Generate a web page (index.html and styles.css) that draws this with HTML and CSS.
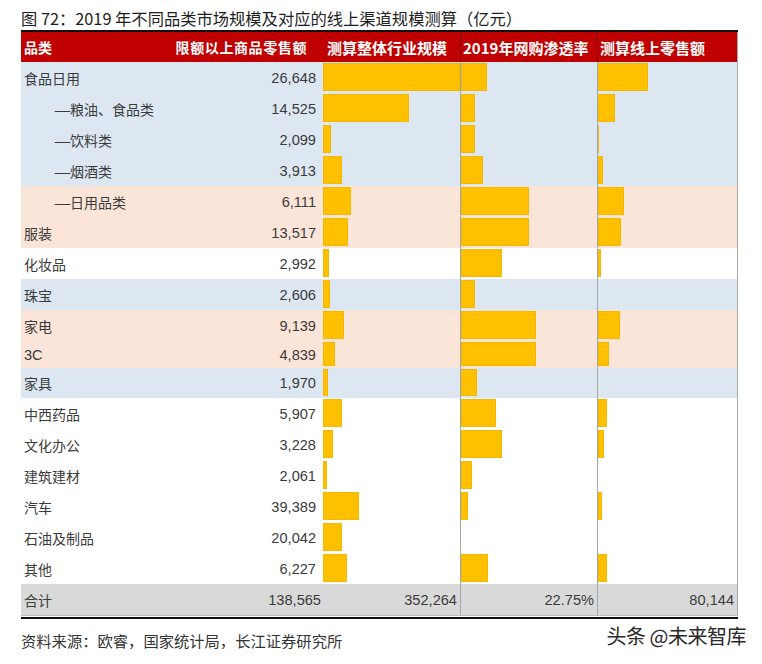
FILE: index.html
```html
<!DOCTYPE html>
<html lang="zh">
<head>
<meta charset="utf-8">
<link rel="stylesheet" href="styles.css">
</head>
<body>
<div class="page">
  <h1 class="title">图 72：2019 年不同品类市场规模及对应的线上渠道规模测算（亿元）</h1>
  <div class="table">
    <div class="row head">
      <div class="first"><span>品类</span><span class="hnum">限额以上商品零售额</span></div>
      <div class="hcell">测算整体行业规模</div>
      <div class="hcell sep">2019年网购渗透率</div>
      <div class="hcell sep">测算线上零售额</div>
    </div>

    <div class="row blue">
      <div class="first"><span>食品日用</span><span class="num">26,648</span></div>
      <div class="bc"><i style="width:137px"></i></div>
      <div class="bc sep"><i style="width:26px"></i></div>
      <div class="bc sep"><i style="width:50px"></i></div>
    </div>
    <div class="row blue">
      <div class="first"><span class="sub"><span class="dash">—</span>粮油、食品类</span><span class="num">14,525</span></div>
      <div class="bc"><i style="width:86px"></i></div>
      <div class="bc sep"><i style="width:14px"></i></div>
      <div class="bc sep"><i style="width:17px"></i></div>
    </div>
    <div class="row blue">
      <div class="first"><span class="sub"><span class="dash">—</span>饮料类</span><span class="num">2,099</span></div>
      <div class="bc"><i style="width:8px"></i></div>
      <div class="bc sep"><i style="width:14px"></i></div>
      <div class="bc sep"><i style="width:1px"></i></div>
    </div>
    <div class="row blue">
      <div class="first"><span class="sub"><span class="dash">—</span>烟酒类</span><span class="num">3,913</span></div>
      <div class="bc"><i style="width:19px"></i></div>
      <div class="bc sep"><i style="width:22px"></i></div>
      <div class="bc sep"><i style="width:5px"></i></div>
    </div>
    <div class="row peach">
      <div class="first"><span class="sub"><span class="dash">—</span>日用品类</span><span class="num">6,111</span></div>
      <div class="bc"><i style="width:28px"></i></div>
      <div class="bc sep"><i style="width:68px"></i></div>
      <div class="bc sep"><i style="width:26px"></i></div>
    </div>
    <div class="row peach">
      <div class="first"><span>服装</span><span class="num">13,517</span></div>
      <div class="bc"><i style="width:25px"></i></div>
      <div class="bc sep"><i style="width:68px"></i></div>
      <div class="bc sep"><i style="width:23px"></i></div>
    </div>
    <div class="row white">
      <div class="first"><span>化妆品</span><span class="num">2,992</span></div>
      <div class="bc"><i style="width:6px"></i></div>
      <div class="bc sep"><i style="width:41px"></i></div>
      <div class="bc sep"><i style="width:3px"></i></div>
    </div>
    <div class="row blue">
      <div class="first"><span>珠宝</span><span class="num">2,606</span></div>
      <div class="bc"><i style="width:7px"></i></div>
      <div class="bc sep"><i style="width:14px"></i></div>
      <div class="bc sep"></div>
    </div>
    <div class="row peach">
      <div class="first"><span>家电</span><span class="num">9,139</span></div>
      <div class="bc"><i style="width:21px"></i></div>
      <div class="bc sep"><i style="width:75px"></i></div>
      <div class="bc sep"><i style="width:22px"></i></div>
    </div>
    <div class="row peach short">
      <div class="first"><span class="lat">3C</span><span class="num">4,839</span></div>
      <div class="bc"><i style="width:12px"></i></div>
      <div class="bc sep"><i style="width:75px"></i></div>
      <div class="bc sep"><i style="width:11px"></i></div>
    </div>
    <div class="row blue mid">
      <div class="first"><span>家具</span><span class="num">1,970</span></div>
      <div class="bc"><i style="width:5px"></i></div>
      <div class="bc sep"><i style="width:16px"></i></div>
      <div class="bc sep"></div>
    </div>
    <div class="row white">
      <div class="first"><span>中西药品</span><span class="num">5,907</span></div>
      <div class="bc"><i style="width:19px"></i></div>
      <div class="bc sep"><i style="width:35px"></i></div>
      <div class="bc sep"><i style="width:9px"></i></div>
    </div>
    <div class="row white">
      <div class="first"><span>文化办公</span><span class="num">3,228</span></div>
      <div class="bc"><i style="width:10px"></i></div>
      <div class="bc sep"><i style="width:41px"></i></div>
      <div class="bc sep"><i style="width:6px"></i></div>
    </div>
    <div class="row white">
      <div class="first"><span>建筑建材</span><span class="num">2,061</span></div>
      <div class="bc"><i style="width:4px"></i></div>
      <div class="bc sep"><i style="width:11px"></i></div>
      <div class="bc sep"></div>
    </div>
    <div class="row white">
      <div class="first"><span>汽车</span><span class="num">39,389</span></div>
      <div class="bc"><i style="width:36px"></i></div>
      <div class="bc sep"><i style="width:7px"></i></div>
      <div class="bc sep"><i style="width:4px"></i></div>
    </div>
    <div class="row white">
      <div class="first"><span>石油及制品</span><span class="num">20,042</span></div>
      <div class="bc"><i style="width:19px"></i></div>
      <div class="bc sep"></div>
      <div class="bc sep"></div>
    </div>
    <div class="row white">
      <div class="first"><span>其他</span><span class="num">6,227</span></div>
      <div class="bc"><i style="width:24px"></i></div>
      <div class="bc sep"><i style="width:27px"></i></div>
      <div class="bc sep"><i style="width:9px"></i></div>
    </div>
    <div class="row total">
      <div class="first"><span>合计</span><span class="tnum">138,565</span></div>
      <div class="tc">352,264</div>
      <div class="tc sep">22.75%</div>
      <div class="tc sep">80,144</div>
    </div>
  </div>
  <div class="bottom">
    <div class="source">资料来源：欧睿，国家统计局，长江证券研究所</div>
    <div class="mark">头条 @未来智库</div>
  </div>
</div>
</body>
</html>
```

FILE: styles.css
```css
* { box-sizing: border-box; }
html, body { margin: 0; padding: 0; background: #fff; }
body {
  font-family: "Noto Sans CJK SC", "Liberation Sans", sans-serif;
  color: #3b3b3b;
}
.page {
  width: 762px;
  height: 664px;
  padding: 6px 0 0 21px;
}
.title {
  margin: 0;
  width: 717px;
  height: 26px;
  font-size: 16.3px;
  font-weight: 400;
  line-height: 24px;
  color: #1e1e1e;
  border-bottom: 2px solid #111;
  white-space: nowrap;
}
.table {
  width: 717px;
  border-right: 1px solid #a9a9a9;
  border-bottom: 1px solid #bdbdbd;
}
.row {
  display: grid;
  grid-template-columns: 302px 137px 137px 140px;
  height: 31px;
}
.row.short { height: 27px; }
.row.mid { height: 30px; }
.blue { background: #dce7f2; }
.peach { background: #fbe4d8; }
.white { background: #fff; }
.total { background: #d9d9d9; }
.head {
  height: 30px;
  background: #c00000;
  color: #fff;
  font-weight: 700;
  font-size: 15px;
}
.first {
  display: flex;
  justify-content: space-between;
  align-items: center;
  padding: 0 7px 0 3px;
  font-size: 14px;
  white-space: nowrap;
}
.head .first { padding-right: 16px; }
.hnum { letter-spacing: 0.6px; }
.hcell {
  display: flex;
  align-items: center;
  padding-left: 4px;
  white-space: nowrap;
}
.head .sep { border-left: 1px solid #8e0000; padding-left: 2px; }
.sub { padding-left: 31px; }
.dash {
  display: inline-block;
  width: 15px;
  text-align: center;
  transform: scaleX(1.4);
}
.num, .tnum, .tc, .lat {
  font-family: "Liberation Sans", Arial, sans-serif;
  font-size: 14.6px;
}
.tnum { margin-right: -5px; }
.bc {
  padding: 1px 0 2px 0;
  display: flex;
}
.bc i {
  display: block;
  height: 100%;
  background: #ffc000;
  box-shadow: inset 0 0 0 1px #f5b800;
}
.sep { border-left: 1px solid #a6a6a6; }
.tc {
  display: flex;
  align-items: center;
  justify-content: flex-end;
  padding-right: 3px;
}
.total .first { padding-right: 7px; }
.bottom {
  position: relative;
  width: 717px;
  border-top: 2px solid #111;
  margin-top: 1px;
}
.source {
  padding-top: 10px;
  font-size: 15.3px;
  color: #333;
  white-space: nowrap;
}
.mark {
  position: absolute;
  right: -8px;
  top: 2px;
  font-size: 20px;
  color: #2a2a2a;
  letter-spacing: -0.5px;
  white-space: nowrap;
  text-shadow: 1px 1px 0 #fff, -1px -1px 0 #fff;
}
```
